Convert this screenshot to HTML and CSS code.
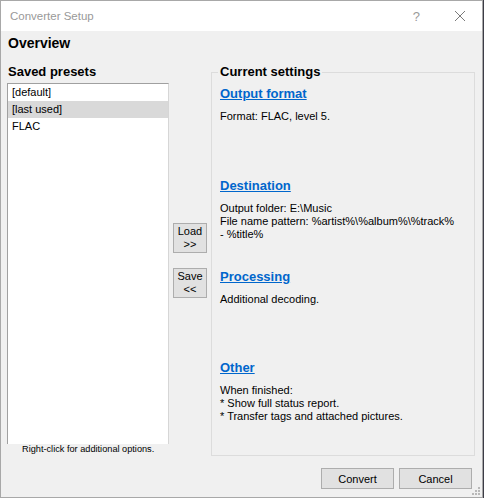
FILE: index.html
```html
<!DOCTYPE html>
<html>
<head>
<meta charset="utf-8">
<link rel="stylesheet" href="styles.css">
</head>
<body>
<div class="window">
  <div class="titlebar">
    <span class="title">Converter Setup</span>
    <span class="help">?</span>
    <svg class="close" width="12" height="12" viewBox="0 0 12 12"><path d="M1 1 L11 11 M11 1 L1 11" stroke="#7a7a7a" stroke-width="1" fill="none"/></svg>
  </div>
  <div class="content">
    <div class="overview">Overview</div>
    <div class="main">
      <div class="left">
        <div class="label">Saved presets</div>
        <ul class="list">
          <li>[default]</li>
          <li class="sel">[last used]</li>
          <li>FLAC</li>
        </ul>
        <div class="note">Right-click for additional options.</div>
      </div>
      <div class="mid">
        <button class="small">Load<br>&gt;&gt;</button>
        <button class="small">Save<br>&lt;&lt;</button>
      </div>
      <fieldset class="group">
        <legend>Current settings</legend>
        <div class="section first">
          <a class="link">Output format</a>
          <p>Format: FLAC, level 5.</p>
        </div>
        <div class="section">
          <a class="link">Destination</a>
          <p>Output folder: E:\Music<br>File name pattern: %artist%\%album%\%track%<br>- %title%</p>
        </div>
        <div class="section">
          <a class="link">Processing</a>
          <p>Additional decoding.</p>
        </div>
        <div class="section">
          <a class="link">Other</a>
          <p>When finished:<br>* Show full status report.<br>* Transfer tags and attached pictures.</p>
        </div>
      </fieldset>
    </div>
    <div class="footer">
      <button class="btn">Convert</button>
      <button class="btn">Cancel</button>
    </div>
    <svg class="grip" width="10" height="10" viewBox="0 0 10 10">
      <rect x="7" y="1" width="2" height="2" fill="#b8b8b8"/>
      <rect x="4" y="4" width="2" height="2" fill="#b8b8b8"/>
      <rect x="7" y="4" width="2" height="2" fill="#b8b8b8"/>
      <rect x="1" y="7" width="2" height="2" fill="#b8b8b8"/>
      <rect x="4" y="7" width="2" height="2" fill="#b8b8b8"/>
      <rect x="7" y="7" width="2" height="2" fill="#b8b8b8"/>
    </svg>
  </div>
</div>
</body>
</html>
```
FILE: styles.css
```css
html, body {
  margin: 0;
  padding: 0;
  background: #3c3c46;
}
body {
  font-family: "Liberation Sans", Arial, sans-serif;
  font-size: 11px;
  color: #000;
}
.window {
  width: 483px;
  height: 498px;
  box-sizing: border-box;
  border: 1px solid #a8a8a8;
  display: flex;
  flex-direction: column;
  background: #f0f0f0;
}
.titlebar {
  height: 30px;
  background: #fff;
  display: flex;
  align-items: center;
  flex: none;
}
.title {
  font-size: 11.5px;
  color: #999;
  padding-left: 9px;
  flex: 1;
}
.help {
  font-size: 13px;
  color: #9a9a9a;
  margin-right: 34px;
}
.close {
  margin-right: 16px;
}
.content {
  position: relative;
  flex: 1;
  display: flex;
  flex-direction: column;
  padding: 0 0 0 6px;
}
.overview {
  font-size: 14px;
  font-weight: bold;
  line-height: 18px;
  height: 18px;
  margin-top: 3px;
  margin-left: 1px;
}
.main {
  display: flex;
  margin-top: 12px;
  height: 392px;
}
.left {
  width: 162px;
  display: flex;
  flex-direction: column;
}
.label {
  font-size: 13px;
  font-weight: bold;
  line-height: 16px;
  height: 16px;
  margin-bottom: 3px;
  margin-left: 1px;
}
.list {
  list-style: none;
  margin: 0;
  padding: 0;
  height: 361px;
  box-sizing: border-box;
  background: #fff;
  border: 1px solid #a0a0a0;
  border-right-color: #d6d6d6;
  border-bottom: none;
}
.list li {
  height: 17px;
  line-height: 17px;
  padding-left: 4px;
}
.list li.sel {
  background: #d9d9d9;
}
.note {
  font-size: 9.2px;
  line-height: 11px;
  padding-left: 15px;
}
.mid {
  width: 42px;
  display: flex;
  flex-direction: column;
  align-items: center;
  justify-content: center;
  gap: 15px;
  padding-top: 1px;
  box-sizing: border-box;
}
button {
  font-family: "Liberation Sans", Arial, sans-serif;
  font-size: 11px;
  color: #000;
  background: #e1e1e1;
  border: 1px solid #adadad;
  padding: 0;
  margin: 0;
}
.small {
  width: 34px;
  height: 30px;
  line-height: 13px;
}
.group {
  width: 264px;
  height: 392px;
  box-sizing: border-box;
  margin: 0;
  padding: 0 8px;
  border: 1px solid #dcdcdc;
}
.group legend {
  font-size: 13px;
  font-weight: bold;
  line-height: 16px;
  padding: 0 2px;
  margin-left: -2px;
}
.section {
  box-sizing: border-box;
  height: 91px;
  padding-top: 6px;
}
.section.first {
  height: 92px;
}
.link {
  display: block;
  font-size: 13px;
  font-weight: bold;
  line-height: 16px;
  color: #0066cc;
  text-decoration: underline;
}
.section p {
  margin: 8px 0 0 0;
  line-height: 13px;
  white-space: nowrap;
}
.footer {
  display: flex;
  justify-content: flex-end;
  gap: 5px;
  margin-top: 12px;
  padding-right: 10px;
}
.btn {
  width: 73px;
  height: 21px;
}
.grip {
  position: absolute;
  right: 1px;
  bottom: 1px;
}
```
